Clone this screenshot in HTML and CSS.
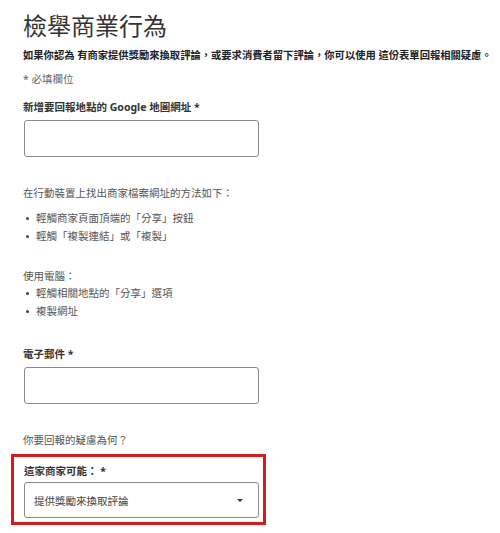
FILE: index.html
```html
<!DOCTYPE html>
<html lang="zh-Hant">
<head>
<meta charset="utf-8">
<title>檢舉商業行為</title>
<link rel="stylesheet" href="styles.css">
</head>
<body>
<main class="page">
  <h1 class="title">檢舉商業行為</h1>
  <p class="intro">如果你認為 有商家提供獎勵來換取評論，或要求消費者留下評論，你可以使用 這份表單回報相關疑慮。</p>
  <p class="required-note">* 必填欄位</p>

  <label class="field-label label-first">新增要回報地點的 Google 地圖網址 *</label>
  <div class="text-input"></div>

  <p class="help help-first">在行動裝置上找出商家檔案網址的方法如下：</p>
  <ul class="steps">
    <li>輕觸商家頁面頂端的「分享」按鈕</li>
    <li>輕觸「複製連結」或「複製」</li>
  </ul>
  <p class="help help-second">使用電腦：</p>
  <ul class="steps">
    <li>輕觸相關地點的「分享」選項</li>
    <li>複製網址</li>
  </ul>

  <label class="field-label label-email">電子郵件 *</label>
  <div class="text-input"></div>

  <p class="help question">你要回報的疑慮為何？</p>

  <div class="highlight">
    <label class="field-label label-select">這家商家可能： *</label>
    <div class="select">
      <span class="select-value">提供獎勵來換取評論</span>
      <span class="caret"></span>
    </div>
  </div>
</main>
</body>
</html>
```

FILE: styles.css
```css
html, body {
  margin: 0;
  padding: 0;
  background: #ffffff;
}

body {
  font-family: "Noto Sans", "Noto Sans CJK TC", sans-serif;
  color: #555555;
}

.page {
  padding: 11px 0 0 23px;
}

.title {
  margin: 0;
  font-size: 24px;
  line-height: 30px;
  font-weight: 400;
  color: #333333;
  white-space: nowrap;
}

.intro {
  margin: 6px 0 0 0;
  font-size: 10.3px;
  line-height: 16px;
  font-weight: 700;
  color: #202124;
  white-space: nowrap;
}

.required-note {
  margin: 8px 0 0 0;
  font-size: 10.5px;
  line-height: 16px;
  color: #666666;
}

.field-label {
  display: block;
  font-size: 10.5px;
  line-height: 16px;
  font-weight: 700;
  color: #333333;
}

.label-first {
  margin-top: 12px;
}

.label-email {
  margin-top: 26px;
}

.text-input {
  box-sizing: border-box;
  width: 235px;
  height: 37px;
  margin-top: 5px;
  margin-left: 1px;
  border: 1px solid #8a8a8a;
  border-radius: 3px;
  background: #ffffff;
}

.help {
  margin: 0;
  font-size: 10.5px;
  line-height: 16px;
  color: #555555;
}

.help-first {
  margin-top: 28px;
}

.help-second {
  margin-top: 23px;
}

.question {
  margin-top: 28px;
}

.steps {
  list-style: none;
  margin: 8px 0 0 0;
  padding: 0;
}

.help-second + .steps {
  margin-top: 0;
}

.steps li {
  position: relative;
  padding-left: 13px;
  font-size: 10.5px;
  line-height: 18px;
  color: #555555;
}

.steps li::before {
  content: "";
  position: absolute;
  left: 3px;
  top: 8px;
  width: 3px;
  height: 3px;
  border-radius: 50%;
  background: #444444;
}

.highlight {
  box-sizing: border-box;
  width: 255px;
  margin: 6px 0 0 -12px;
  padding: 6px 5px 4px 10px;
  border: 3px solid #d71a1a;
}

.label-select {
  margin: 0 0 3px 0;
}

.select {
  box-sizing: border-box;
  width: 235px;
  height: 36px;
  display: flex;
  align-items: center;
  justify-content: space-between;
  padding: 0 15px 0 9px;
  border: 1px solid #8a8a8a;
  border-radius: 3px;
  background: #ffffff;
}

.select-value {
  font-size: 10.5px;
  color: #444444;
}

.caret {
  width: 0;
  height: 0;
  border-left: 3.5px solid transparent;
  border-right: 3.5px solid transparent;
  border-top: 3.5px solid #333333;
}
```
